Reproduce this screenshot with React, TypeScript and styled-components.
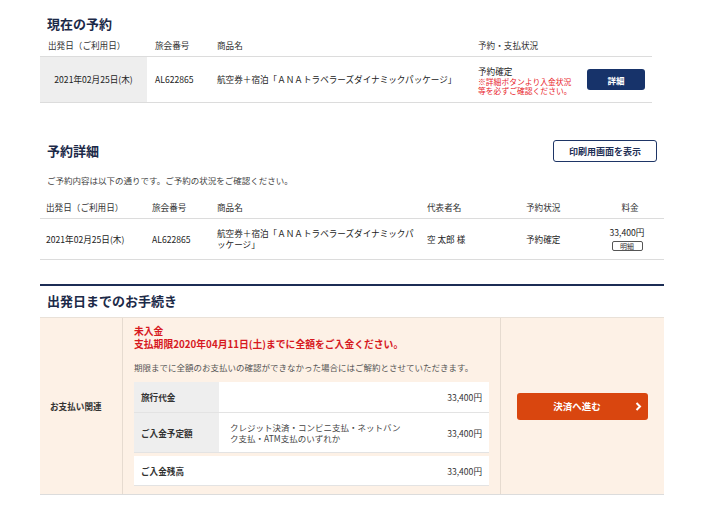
import React from "react";
import styled, { createGlobalStyle } from "styled-components";

const GlobalStyle = createGlobalStyle`
  body {
    margin: 0;
    background: #fff;
    font-family: "Noto Sans CJK JP", "Noto Sans", sans-serif;
    color: #333;
  }
  * { box-sizing: border-box; }
`;

const Page = styled.div`
  width: 664px;
  padding: 15px 0 20px 40px;
`;

const Title = styled.h2`
  margin: 0;
  padding-left: 7px;
  font-size: 13px;
  line-height: 18px;
  font-weight: 700;
  color: #1c2a48;
`;

const CurrentGrid = styled.div`
  display: grid;
  grid-template-columns: 107px 62px 261px 110px 72px;
  width: 612px;
`;

const HeadCell = styled.div<{ $center?: boolean }>`
  height: 24px;
  display: flex;
  align-items: center;
  justify-content: ${(p) => (p.$center ? "center" : "flex-start")};
  padding-left: ${(p) => (p.$center ? "0" : "8px")};
  font-size: 8.6px;
  color: #333;
  border-bottom: 1px solid #dcdcdc;
`;

const DataCell = styled.div<{ $shade?: boolean; $center?: boolean; $h: number }>`
  height: ${(p) => p.$h}px;
  display: flex;
  align-items: center;
  justify-content: ${(p) => (p.$center ? "center" : "flex-start")};
  padding-left: ${(p) => (p.$center ? "0" : "8px")};
  background: ${(p) => (p.$shade ? "#eeeeee" : "#fff")};
  font-size: 8.6px;
  line-height: 11px;
  color: #222;
  border-bottom: 1px solid #dcdcdc;
`;

const Status = styled.div`
  height: 46px;
  display: flex;
  flex-direction: column;
  justify-content: center;
  padding: 4px 0 0 8px;
  border-bottom: 1px solid #dcdcdc;
  font-size: 8.6px;
  line-height: 9.5px;
  color: #222;
`;

const Note = styled.span`
  max-width: 98px;
  color: #e8242b;
  font-size: 7.8px;
  line-height: 9.5px;
`;

const DetailButton = styled.button`
  width: 58px;
  height: 21px;
  margin-left: 7px;
  border: none;
  border-radius: 3px;
  background: #17336a;
  color: #fff;
  font-family: inherit;
  font-size: 8.5px;
  font-weight: 700;
`;

const SectionHead = styled.div`
  display: flex;
  justify-content: space-between;
  align-items: center;
  width: 617px;
  margin-top: 37px;
`;

const PrintButton = styled.button`
  width: 104px;
  height: 22px;
  border: 1px solid #1e3566;
  border-radius: 3px;
  background: #fff;
  color: #1e2f55;
  font-family: inherit;
  font-size: 9px;
  font-weight: 700;
`;

const Intro = styled.p`
  margin: 12px 0 0 7px;
  font-size: 8.5px;
  line-height: 12px;
  color: #444;
`;

const DetailGrid = styled.div`
  display: grid;
  grid-template-columns: 106px 65px 210px 99px 70px 74px;
  margin-top: 9px;
  & > div {
    padding-left: 6px;
  }
`;

const Product = styled.div`
  height: 41px;
  display: flex;
  align-items: center;
  padding-right: 4px;
  font-size: 8.6px;
  line-height: 11px;
  color: #222;
  border-bottom: 1px solid #dcdcdc;
`;

const Price = styled.div`
  height: 41px;
  display: flex;
  flex-direction: column;
  align-items: center;
  justify-content: center;
  gap: 3px;
  padding-left: 0 !important;
  font-size: 8.6px;
  line-height: 11px;
  color: #222;
  border-bottom: 1px solid #dcdcdc;
`;

const SmallButton = styled.span`
  display: inline-flex;
  align-items: center;
  justify-content: center;
  width: 31px;
  height: 10px;
  border: 1px solid #555;
  border-radius: 2px;
  font-size: 7px;
  color: #333;
`;

const Rule = styled.div`
  height: 2px;
  margin: 24px 0 6px;
  background: #1c2d55;
`;

const PayBox = styled.div`
  display: grid;
  grid-template-columns: 82px 379px 163px;
  margin-top: 7px;
  background: #fdf1e6;
  border-top: 1px solid #e9e1d8;
  border-bottom: 1px solid #dcdcdc;
`;

const BoxLabel = styled.div`
  display: flex;
  align-items: center;
  padding-left: 10px;
  font-size: 8.6px;
  font-weight: 700;
  color: #333;
`;

const BoxMain = styled.div`
  padding: 7px 11px 8px;
  border-left: 1px solid #e6dbd0;
  border-right: 1px solid #e6dbd0;
`;

const Alert = styled.div`
  color: #d7191f;
  font-size: 9.8px;
  font-weight: 700;
  line-height: 13px;
`;

const Notice = styled.p`
  margin: 10px 0 0;
  font-size: 8.5px;
  line-height: 12px;
  color: #555;
`;

const PayTable = styled.div`
  margin-top: 9px;
  display: flex;
  flex-direction: column;
`;

const PayRow = styled.div<{ $h: number; $gap?: boolean }>`
  display: grid;
  grid-template-columns: 85px 1fr 80px;
  height: ${(p) => p.$h}px;
  margin-top: ${(p) => (p.$gap ? "3px" : "0")};
  background: #fff;
  border-bottom: 1px solid #e3e3e3;
`;

const PayLabel = styled.div<{ $shade?: boolean }>`
  display: flex;
  align-items: center;
  padding-left: 7px;
  background: ${(p) => (p.$shade ? "#eeeeee" : "#fff")};
  font-size: 8.6px;
  font-weight: 700;
  color: #333;
`;

const PayDesc = styled.div`
  display: flex;
  align-items: center;
  padding: 0 8px 0 11px;
  font-size: 8.5px;
  line-height: 11px;
  color: #444;
`;

const PayAmount = styled.div`
  display: flex;
  align-items: center;
  justify-content: flex-end;
  padding-right: 7px;
  font-size: 8.6px;
  color: #333;
`;

const BoxAction = styled.div`
  display: flex;
  align-items: center;
  justify-content: center;
`;

const ProceedButton = styled.button`
  display: grid;
  grid-template-columns: 1fr 14px;
  align-items: center;
  justify-items: center;
  width: 131px;
  height: 27px;
  padding: 0 3px 0 6px;
  border: none;
  border-radius: 3px;
  background: #d9460f;
  color: #fff;
  font-family: inherit;
  font-size: 9.5px;
  font-weight: 700;
`;

const Chevron = () => (
  <svg width="7" height="9" viewBox="0 0 7 9">
    <path d="M1.5 1 L5 4.5 L1.5 8" fill="none" stroke="#fff" strokeWidth="2" />
  </svg>
);

export default function App() {
  return (
    <>
      <GlobalStyle />
      <Page>
        <Title>現在の予約</Title>
        <CurrentGrid>
          <HeadCell>出発日（ご利用日）</HeadCell>
          <HeadCell>旅会番号</HeadCell>
          <HeadCell>商品名</HeadCell>
          <HeadCell>予約・支払状況</HeadCell>
          <HeadCell />
          <DataCell $h={46} $shade $center>
            2021年02月25日(木)
          </DataCell>
          <DataCell $h={46}>AL622865</DataCell>
          <DataCell $h={46}>航空券＋宿泊「ＡＮＡトラベラーズダイナミックパッケージ」</DataCell>
          <Status>
            <span>予約確定</span>
            <Note>※詳細ボタンより入金状況等を必ずご確認ください。</Note>
          </Status>
          <DataCell $h={46} style={{ paddingLeft: 0 }}>
            <DetailButton>詳細</DetailButton>
          </DataCell>
        </CurrentGrid>

        <SectionHead>
          <Title>予約詳細</Title>
          <PrintButton>印刷用画面を表示</PrintButton>
        </SectionHead>
        <Intro>ご予約内容は以下の通りです。ご予約の状況をご確認ください。</Intro>
        <DetailGrid>
          <HeadCell>出発日（ご利用日）</HeadCell>
          <HeadCell>旅会番号</HeadCell>
          <HeadCell>商品名</HeadCell>
          <HeadCell>代表者名</HeadCell>
          <HeadCell>予約状況</HeadCell>
          <HeadCell $center>料金</HeadCell>
          <DataCell $h={41}>2021年02月25日(木)</DataCell>
          <DataCell $h={41}>AL622865</DataCell>
          <Product>航空券＋宿泊「ＡＮＡトラベラーズダイナミックパッケージ」</Product>
          <DataCell $h={41}>空 太郎 様</DataCell>
          <DataCell $h={41}>予約確定</DataCell>
          <Price>
            <span>33,400円</span>
            <SmallButton>明細</SmallButton>
          </Price>
        </DetailGrid>

        <Rule />
        <Title>出発日までのお手続き</Title>
        <PayBox>
          <BoxLabel>お支払い関連</BoxLabel>
          <BoxMain>
            <Alert>未入金</Alert>
            <Alert>支払期限2020年04月11日(土)までに全額をご入金ください。</Alert>
            <Notice>
              期限までに全額のお支払いの確認ができなかった場合にはご解約とさせていただきます。
            </Notice>
            <PayTable>
              <PayRow $h={31}>
                <PayLabel $shade>旅行代金</PayLabel>
                <PayDesc />
                <PayAmount>33,400円</PayAmount>
              </PayRow>
              <PayRow $h={40}>
                <PayLabel $shade>ご入金予定額</PayLabel>
                <PayDesc>クレジット決済・コンビニ支払・ネットバンク支払・ATM支払のいずれか</PayDesc>
                <PayAmount>33,400円</PayAmount>
              </PayRow>
              <PayRow $h={30} $gap>
                <PayLabel>ご入金残高</PayLabel>
                <PayDesc />
                <PayAmount>33,400円</PayAmount>
              </PayRow>
            </PayTable>
          </BoxMain>
          <BoxAction>
            <ProceedButton>
              <span>決済へ進む</span>
              <Chevron />
            </ProceedButton>
          </BoxAction>
        </PayBox>
      </Page>
    </>
  );
}
